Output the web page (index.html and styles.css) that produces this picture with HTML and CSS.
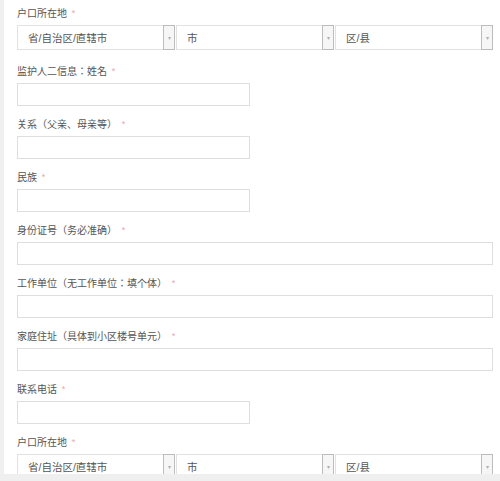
FILE: index.html
```html
<!DOCTYPE HTML>
<html>
<head>
<meta charset="utf-8">
<link rel="stylesheet" href="styles.css">
</head>
<body>
<div id="app" class="form">
    <div class="field field-select">
        <label>户口所在地 <span class="req">*</span></label>
        <div class="select-row">
            <div class="select"><span>省/自治区/直辖市</span><span class="arrow">▾</span></div>
            <div class="select"><span>市</span><span class="arrow">▾</span></div>
            <div class="select"><span>区/县</span><span class="arrow">▾</span></div>
        </div>
    </div>
    <div class="field">
        <label>监护人二信息：姓名 <span class="req">*</span></label>
        <input type="text" class="short">
    </div>
    <div class="field">
        <label>关系（父亲、母亲等） <span class="req">*</span></label>
        <input type="text" class="short">
    </div>
    <div class="field">
        <label>民族 <span class="req">*</span></label>
        <input type="text" class="short">
    </div>
    <div class="field">
        <label>身份证号（务必准确） <span class="req">*</span></label>
        <input type="text">
    </div>
    <div class="field">
        <label>工作单位（无工作单位：填个体） <span class="req">*</span></label>
        <input type="text">
    </div>
    <div class="field">
        <label>家庭住址（具体到小区楼号单元） <span class="req">*</span></label>
        <input type="text">
    </div>
    <div class="field">
        <label>联系电话 <span class="req">*</span></label>
        <input type="text" class="short">
    </div>
    <div class="field field-select">
        <label>户口所在地 <span class="req">*</span></label>
        <div class="select-row">
            <div class="select"><span>省/自治区/直辖市</span><span class="arrow">▾</span></div>
            <div class="select"><span>市</span><span class="arrow">▾</span></div>
            <div class="select"><span>区/县</span><span class="arrow">▾</span></div>
        </div>
    </div>
</div>
<div class="bottom-bar"></div>
</body>
</html>
```

FILE: styles.css
```css
body {
    margin: 0;
    background: #fff;
    color: #555;
    font-family: "Liberation Sans", "Noto Sans CJK JP", sans-serif;
    font-size: 10px;
}

.form {
    border-left: 4px solid #f0f0f0;
    padding: 4px 7px 0 13px;
    min-height: 481px;
    box-sizing: border-box;
}

.field {
    display: flex;
    flex-direction: column;
    margin-bottom: 9px;
}

.field-select {
    margin-bottom: 12px;
}

.field label {
    line-height: 18px;
    height: 18px;
    margin-bottom: 3px;
    color: #555;
}

.req {
    color: #eba6ac;
    font-size: 9px;
    margin-left: 2px;
    vertical-align: 1px;
}

.field input {
    height: 23px;
    box-sizing: border-box;
    border: 1px solid #dedede;
    background: #fff;
    outline: none;
    width: 100%;
    margin: 0;
}

.field input.short {
    width: 233px;
}

.select-row {
    display: grid;
    grid-template-columns: repeat(3, 1fr);
    gap: 1px;
}

.select {
    height: 25px;
    box-sizing: border-box;
    border: 1px solid #e2e2e2;
    display: flex;
    align-items: center;
    justify-content: space-between;
    padding-left: 10px;
    color: #555;
    background: #fff;
    font-size: 10.5px;
}

.select .arrow {
    align-self: stretch;
    width: 10px;
    margin: -1px -1px -1px 0;
    border: 1px solid #bcbcbc;
    background: #f6f6f6;
    color: #b0b0b0;
    font-size: 6px;
    display: flex;
    align-items: center;
    justify-content: center;
}

.bottom-bar {
    position: fixed;
    left: 0;
    right: 0;
    bottom: 0;
    height: 7px;
    background: #efefef;
}
```
